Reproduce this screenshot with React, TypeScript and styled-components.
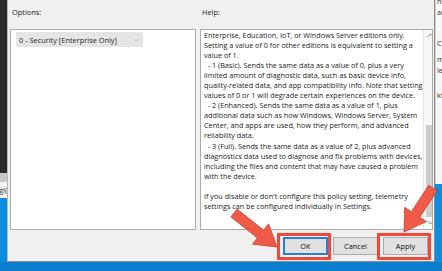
import React from 'react';
import styled, { createGlobalStyle } from 'styled-components';

const GlobalStyle = createGlobalStyle`
  html, body {
    margin: 0;
    padding: 0;
  }
  body {
    width: 442px;
    height: 271px;
    overflow: hidden;
    font-family: 'Open Sans', 'Noto Sans', sans-serif;
    color: #1a1a1a;
  }
`;

const helpLines = [
  'Enterprise, Education, IoT, or Windows Server editions only.',
  'Setting a value of 0 for other editions is equivalent to setting a',
  'value of 1.',
  '  - 1 (Basic). Sends the same data as a value of 0, plus a very',
  'limited amount of diagnostic data, such as basic device info,',
  'quality-related data, and app compatibility info. Note that setting',
  'values of 0 or 1 will degrade certain experiences on the device.',
  '  - 2 (Enhanced). Sends the same data as a value of 1, plus',
  'additional data such as how Windows, Windows Server, System',
  'Center, and apps are used, how they perform, and advanced',
  'reliability data.',
  '  - 3 (Full). Sends the same data as a value of 2, plus advanced',
  'diagnostics data used to diagnose and fix problems with devices,',
  'including the files and content that may have caused a problem',
  'with the device.',
  '',
  "If you disable or don't configure this policy setting, telemetry",
  'settings can be configured individually in Settings.',
];

// fragments of the window behind the dialog, with their gap above
const behindLines: { text: string; gap: number }[] = [
  { text: 'ns', gap: -4 },
  { text: 'ace', gap: 0 },
  { text: 'Co', gap: 21 },
  { text: 'm', gap: 5 },
  { text: 'ler', gap: 1 },
  { text: 'kto', gap: 14 },
];

type Pt = [number, number];

// builds the outline of a fat annotation arrow from its tail to its tip
const arrowPoints = (tail: Pt, tip: Pt, shaft: number, head: number, headLen: number) => {
  const dx = tip[0] - tail[0];
  const dy = tip[1] - tail[1];
  const len = Math.hypot(dx, dy);
  const ux = dx / len;
  const uy = dy / len;
  const nx = -uy;
  const ny = ux;
  const neck: Pt = [tip[0] - ux * headLen, tip[1] - uy * headLen];
  const pts: Pt[] = [
    [tail[0] - nx * shaft, tail[1] - ny * shaft],
    [neck[0] - nx * shaft, neck[1] - ny * shaft],
    [neck[0] - nx * head, neck[1] - ny * head],
    tip,
    [neck[0] + nx * head, neck[1] + ny * head],
    [neck[0] + nx * shaft, neck[1] + ny * shaft],
    [tail[0] + nx * shaft, tail[1] + ny * shaft],
  ];
  return pts.map((p) => `${p[0].toFixed(1)},${p[1].toFixed(1)}`).join(' ');
};

export default function App() {
  return (
    <>
      <GlobalStyle />
      <Screen>
        <TopRow>
          <LeftEdge>
            <DarkPane />
            <BehindBar />
            <BehindSnippet>gl(</BehindSnippet>
            <Desktop />
          </LeftEdge>

          <Dialog>
            <LabelRow>
              <Label>Options:</Label>
              <Label>Help:</Label>
            </LabelRow>

            <Panels>
              <OptionsBox>
                <Combo>
                  <span>0 - Security [Enterprise Only]</span>
                  <ComboChevron viewBox="0 0 8 5">
                    <path d="M1 1 L4 4 L7 1" />
                  </ComboChevron>
                </Combo>
              </OptionsBox>

              <HelpBox>
                <HelpText>
                  {helpLines.map((line, idx) => (
                    <HelpLine key={idx}>{line || '\u00a0'}</HelpLine>
                  ))}
                </HelpText>
                <ScrollBar>
                  <ScrollArrow viewBox="0 0 8 5">
                    <path d="M1 4 L4 1 L7 4" />
                  </ScrollArrow>
                  <ScrollTrack>
                    <ScrollThumb />
                  </ScrollTrack>
                  <ScrollArrow viewBox="0 0 8 5">
                    <path d="M1 1 L4 4 L7 1" />
                  </ScrollArrow>
                </ScrollBar>
              </HelpBox>
            </Panels>

            <ButtonRow>
              <Button $primary>OK</Button>
              <Button>Cancel</Button>
              <Button>Apply</Button>
            </ButtonRow>
          </Dialog>

          <RightEdge>
            <BehindWindow>
              {behindLines.map((l, idx) => (
                <BehindLine key={idx} $gap={l.gap}>
                  {l.text}
                </BehindLine>
              ))}
            </BehindWindow>
            <Desktop />
          </RightEdge>
        </TopRow>
        <BottomDesktop />

        {/* annotation overlays */}
        <Highlight style={{ left: 277, top: 233, width: 54, height: 27 }} />
        <Highlight style={{ left: 377, top: 233, width: 54, height: 27 }} />
        <ArrowLayer viewBox="0 0 442 271">
          <polygon points={arrowPoints([234, 213], [277, 247], 5, 13, 21)} />
          <polygon points={arrowPoints([433, 188], [404, 232], 5, 13, 21)} />
        </ArrowLayer>
      </Screen>
    </>
  );
}

const Screen = styled.div`
  position: relative;
  width: 442px;
  height: 271px;
  display: flex;
  flex-direction: column;
  overflow: hidden;
  background: #0b86d9;
`;

const TopRow = styled.div`
  display: flex;
  height: 262px;
`;

const LeftEdge = styled.div`
  width: 7px;
  display: flex;
  flex-direction: column;
`;

const DarkPane = styled.div`
  height: 173px;
  background: #2b2b2b;
`;

const BehindBar = styled.div`
  height: 9px;
  background: #c9c9c9;
`;

const BehindSnippet = styled.div`
  height: 16px;
  background: #f2f2f2;
  font-size: 7.6px;
  line-height: 16px;
  color: #333;
  overflow: hidden;
  white-space: nowrap;
  text-indent: -1px;
`;

const Desktop = styled.div`
  flex: 1;
  background: #0b8de2;
`;

const Dialog = styled.div`
  width: 426px;
  display: flex;
  flex-direction: column;
  background: #f0f0f0;
  border-left: 1px solid #b9b9b9;
  border-right: 1px solid #8c8c8c;
  border-bottom: 1px solid #8f8f8f;
`;

const LabelRow = styled.div`
  height: 29px;
  display: grid;
  grid-template-columns: 190px 1fr;
  padding-left: 4px;
  align-items: center;
`;

const Label = styled.div`
  font-size: 7.4px;
  color: #222;
  margin-top: -5px;
`;

const Panels = styled.div`
  display: grid;
  grid-template-columns: 186px 233px;
  gap: 4px;
  padding-left: 2px;
  height: 201px;
`;

const OptionsBox = styled.div`
  background: #fff;
  border: 1px solid #acacac;
  padding: 2px 0 0 5px;
`;

const Combo = styled.div`
  width: 127px;
  height: 15px;
  box-sizing: border-box;
  display: flex;
  align-items: center;
  justify-content: space-between;
  padding: 0 4px 0 3px;
  background: #e5e5e5;
  font-size: 7.4px;
  color: #2a2a2a;
`;

const ComboChevron = styled.svg`
  width: 6px;
  height: 4px;
  fill: none;
  stroke: #b8b8b8;
  stroke-width: 1;
`;

const HelpBox = styled.div`
  background: #fff;
  border: 1px solid #acacac;
  display: flex;
  overflow: hidden;
`;

const HelpText = styled.div`
  flex: 1;
  padding: 0 0 0 3px;
  font-size: 7.25px;
  line-height: 10.05px;
  color: #1a1a1a;
`;

const HelpLine = styled.div`
  white-space: pre;
  overflow: hidden;
`;

const ScrollBar = styled.div`
  width: 13px;
  display: flex;
  flex-direction: column;
  background: #f7f7f7;
  border-left: 1px solid #e6e6e6;
`;

const ScrollArrow = styled.svg`
  width: 13px;
  height: 5px;
  padding: 3px 0 4px;
  fill: none;
  stroke: #8a8a8a;
  stroke-width: 1;
`;

const ScrollTrack = styled.div`
  flex: 1;
  display: flex;
  flex-direction: column;
  justify-content: flex-end;
  padding: 0 2px;
`;

const ScrollThumb = styled.div`
  height: 92px;
  background: #cdcdcd;
`;

const ButtonRow = styled.div`
  display: flex;
  justify-content: flex-end;
  gap: 5px;
  padding: 7px 6px 0 0;
`;

const Button = styled.button<{ $primary?: boolean }>`
  width: 45px;
  height: 18px;
  box-sizing: border-box;
  margin: 0;
  padding: 0;
  font-family: inherit;
  font-size: 7.4px;
  color: #111;
  background: #e1e1e1;
  border: ${({ $primary }) => ($primary ? '2px solid #2a7fd4' : '1px solid #adadad')};
`;

const RightEdge = styled.div`
  width: 7px;
  display: flex;
  flex-direction: column;
`;

const BehindWindow = styled.div`
  height: 184px;
  background: #f7f7f7;
  border-left: 1px solid #d0d0d0;
  padding-left: 1px;
  overflow: hidden;
`;

const BehindLine = styled.div<{ $gap: number }>`
  margin-top: ${({ $gap }) => $gap}px;
  font-size: 7.4px;
  line-height: 10.5px;
  color: #333;
  white-space: nowrap;
`;

const BottomDesktop = styled.div`
  flex: 1;
  background: #0a7fd0;
`;

const Highlight = styled.div`
  position: absolute;
  box-sizing: border-box;
  border: 3px solid #ea4b3c;
  border-radius: 1px;
  box-shadow: 0 0 1px rgba(120, 20, 10, 0.5);
`;

const ArrowLayer = styled.svg`
  position: absolute;
  inset: 0;
  width: 442px;
  height: 271px;
  pointer-events: none;

  polygon {
    fill: #f05a48;
    stroke: #c8402f;
    stroke-width: 0.8;
    stroke-linejoin: round;
  }
`;
